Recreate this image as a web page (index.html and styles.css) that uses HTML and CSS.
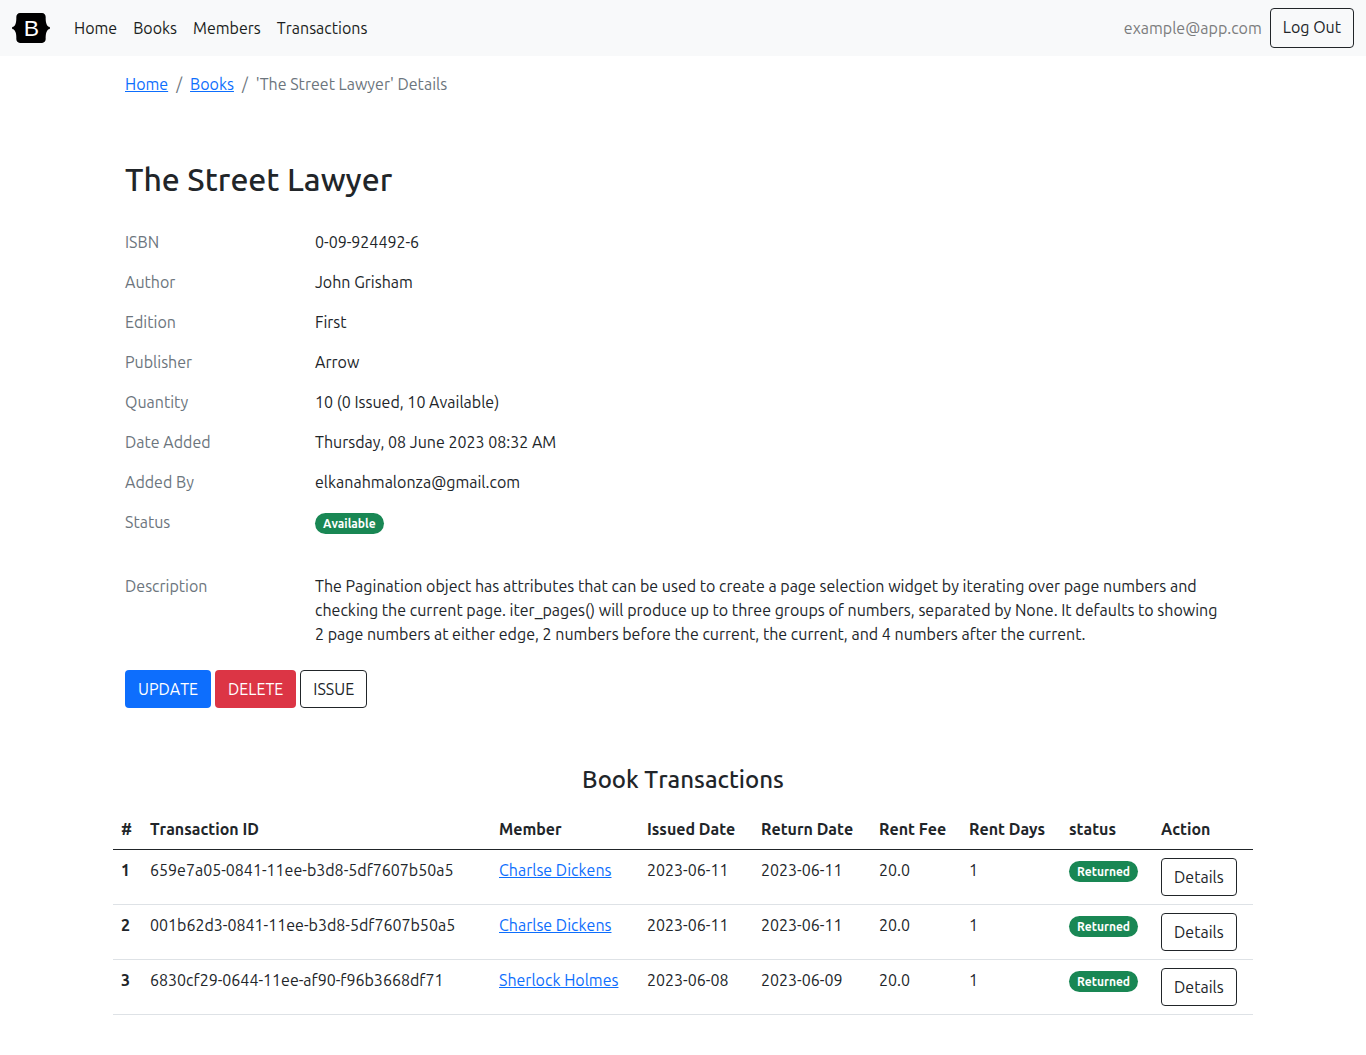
FILE: index.html
```html
<!DOCTYPE html>
<html lang="en">
<head>
  <meta charset="utf-8">
  <meta name="viewport" content="width=device-width, initial-scale=1">
  <title>'The Street Lawyer' Details</title>
  <link rel="stylesheet" href="styles.css">
</head>
<body>
  <header class="navbar">
    <a class="brand" href="#" aria-label="Library home">
      <svg width="38" height="30" viewBox="0 0 118 94">
        <path d="M24.509 0c-6.733 0-11.715 5.893-11.492 12.284.214 6.14-.064 14.092-2.066 20.577C8.943 39.365 5.547 43.485 0 44.014v5.972c5.547.529 8.943 4.649 10.951 11.153 2.002 6.485 2.28 14.437 2.066 20.577C12.794 88.106 17.776 94 24.51 94H93.5c6.733 0 11.714-5.893 11.491-12.284-.214-6.14.064-14.092 2.066-20.577 2.009-6.504 5.396-10.624 10.943-11.153v-5.972c-5.547-.529-8.934-4.649-10.943-11.153-2.002-6.484-2.28-14.437-2.066-20.577C105.214 5.894 100.233 0 93.5 0H24.508z"/>
        <text class="brand-letter" x="60" y="72" text-anchor="middle">B</text>
      </svg>
    </a>
    <nav class="nav-links">
      <a href="#">Home</a>
      <a href="#">Books</a>
      <a href="#">Members</a>
      <a href="#">Transactions</a>
    </nav>
    <div class="account">
      <span class="account-email">example@app.com</span>
      <button class="btn btn-outline btn-logout" type="button">Log Out</button>
    </div>
  </header>

  <main class="container">
    <nav aria-label="Breadcrumb">
      <ol class="breadcrumb">
        <li><a href="#">Home</a></li>
        <li><a href="#">Books</a></li>
        <li>'The Street Lawyer' Details</li>
      </ol>
    </nav>

    <h1>The Street Lawyer</h1>

    <dl class="details">
      <dt>ISBN</dt><dd>0-09-924492-6</dd>
      <dt>Author</dt><dd>John Grisham</dd>
      <dt>Edition</dt><dd>First</dd>
      <dt>Publisher</dt><dd>Arrow</dd>
      <dt>Quantity</dt><dd>10 (0 Issued, 10 Available)</dd>
      <dt>Date Added</dt><dd>Thursday, 08 June 2023 08:32 AM</dd>
      <dt>Added By</dt><dd>elkanahmalonza@gmail.com</dd>
      <dt>Status</dt><dd><span class="badge">Available</span></dd>
    </dl>
    <dl class="details description">
      <dt>Description</dt>
      <dd>The Pagination object has attributes that can be used to create a page selection widget by iterating over page numbers and checking the current page. iter_pages() will produce up to three groups of numbers, separated by None. It defaults to showing 2 page numbers at either edge, 2 numbers before the current, the current, and 4 numbers after the current.</dd>
    </dl>

    <div class="actions">
      <button class="btn btn-primary" type="button">UPDATE</button>
      <button class="btn btn-danger" type="button">DELETE</button>
      <button class="btn btn-outline" type="button">ISSUE</button>
    </div>

    <h2>Book Transactions</h2>
    <table class="transactions">
      <colgroup>
        <col class="col-num"><col><col class="col-member"><col class="col-issued"><col class="col-return"><col class="col-fee"><col class="col-days"><col class="col-status"><col class="col-action">
      </colgroup>
      <thead>
        <tr>
          <th scope="col">#</th><th scope="col">Transaction ID</th><th scope="col">Member</th><th scope="col">Issued Date</th><th scope="col">Return Date</th><th scope="col">Rent Fee</th><th scope="col">Rent Days</th><th scope="col">status</th><th scope="col">Action</th>
        </tr>
      </thead>
      <tbody>
        <tr>
          <th scope="row">1</th><td>659e7a05-0841-11ee-b3d8-5df7607b50a5</td><td><a href="#">Charlse Dickens</a></td><td>2023-06-11</td><td>2023-06-11</td><td>20.0</td><td>1</td><td><span class="badge">Returned</span></td><td><button class="btn btn-outline" type="button">Details</button></td>
        </tr>
        <tr>
          <th scope="row">2</th><td>001b62d3-0841-11ee-b3d8-5df7607b50a5</td><td><a href="#">Charlse Dickens</a></td><td>2023-06-11</td><td>2023-06-11</td><td>20.0</td><td>1</td><td><span class="badge">Returned</span></td><td><button class="btn btn-outline" type="button">Details</button></td>
        </tr>
        <tr>
          <th scope="row">3</th><td>6830cf29-0644-11ee-af90-f96b3668df71</td><td><a href="#">Sherlock Holmes</a></td><td>2023-06-08</td><td>2023-06-09</td><td>20.0</td><td>1</td><td><span class="badge">Returned</span></td><td><button class="btn btn-outline" type="button">Details</button></td>
        </tr>
      </tbody>
    </table>
  </main>
</body>
</html>
```
FILE: styles.css
```css
* { box-sizing: border-box; }

body {
  margin: 0;
  background: #fff;
  color: #212529;
  font-family: Ubuntu, "Noto Sans", sans-serif;
  font-size: 16px;
  font-kerning: none;
  line-height: 24px;
}

a { color: #0d6efd; text-underline-offset: 1px; }

.navbar {
  display: flex;
  align-items: center;
  padding: 8px 12px;
  background: #f8f9fa;
}
.brand { display: flex; margin-right: 16px; }
.brand-letter { font-family: "Liberation Sans", Arial, sans-serif; font-size: 72px; fill: #fff; }
.nav-links { display: flex; }
.nav-links a { padding: 0 8px; color: #1a1d20; text-decoration: none; }
.account { display: flex; align-items: center; gap: 8px; margin-left: auto; }
.account-email { color: #7b7c7d; }

.btn {
  height: 38px;
  padding: 0 12px;
  border: 1px solid transparent;
  border-radius: 4px;
  background: transparent;
  color: #212529;
  font: inherit;
  font-kerning: none;
  cursor: pointer;
}
.btn-outline { border-color: #212529; }
.btn-primary { background: #0d6efd; color: #fff; }
.btn-danger { background: #dc3545; color: #fff; }
.btn-logout { height: 40px; padding-bottom: 2px; }

.container {
  max-width: 1140px;
  margin: 0 auto;
  padding: 16px 0 40px;
}

.breadcrumb {
  display: flex;
  margin: 0 12px;
  padding: 0;
  list-style: none;
  color: #6c757d;
}
.breadcrumb li + li::before { content: "/"; padding: 0 8px; }

h1 { margin: 64px 12px 32px; font-size: 32px; font-weight: 550; line-height: 38px; }

.details {
  display: grid;
  grid-template-columns: 190px 1fr;
  row-gap: 16px;
  margin: 0 12px;
}
.details dt { color: #6c757d; }
.details dd { margin: 0; padding-right: 12px; }
.description { margin: 40px 12px 24px; }

.badge {
  display: block;
  width: fit-content;
  margin-top: 3px;
  padding: 0 8px;
  border-radius: 12px;
  background: #198754;
  color: #fff;
  font-size: 12px;
  font-weight: 700;
  line-height: 21px;
}

.actions { display: flex; gap: 4px; margin: 0 12px; }

h2 { margin: 57px 0 15px; font-size: 24px; font-weight: 550; line-height: 29px; text-align: center; }

.transactions { width: 100%; table-layout: fixed; border-collapse: separate; border-spacing: 0; }
.transactions th, .transactions td {
  padding: 8px;
  border-bottom: 1px solid #dee2e6;
  text-align: left;
  vertical-align: top;
  white-space: nowrap;
}
.transactions thead th { border-bottom-color: #212529; }
.transactions .btn { display: block; }
.col-num { width: 29px; }
.col-member { width: 148px; }
.col-issued { width: 114px; }
.col-return { width: 118px; }
.col-fee { width: 90px; }
.col-days { width: 100px; }
.col-status { width: 92px; }
.col-action { width: 100px; }
```
